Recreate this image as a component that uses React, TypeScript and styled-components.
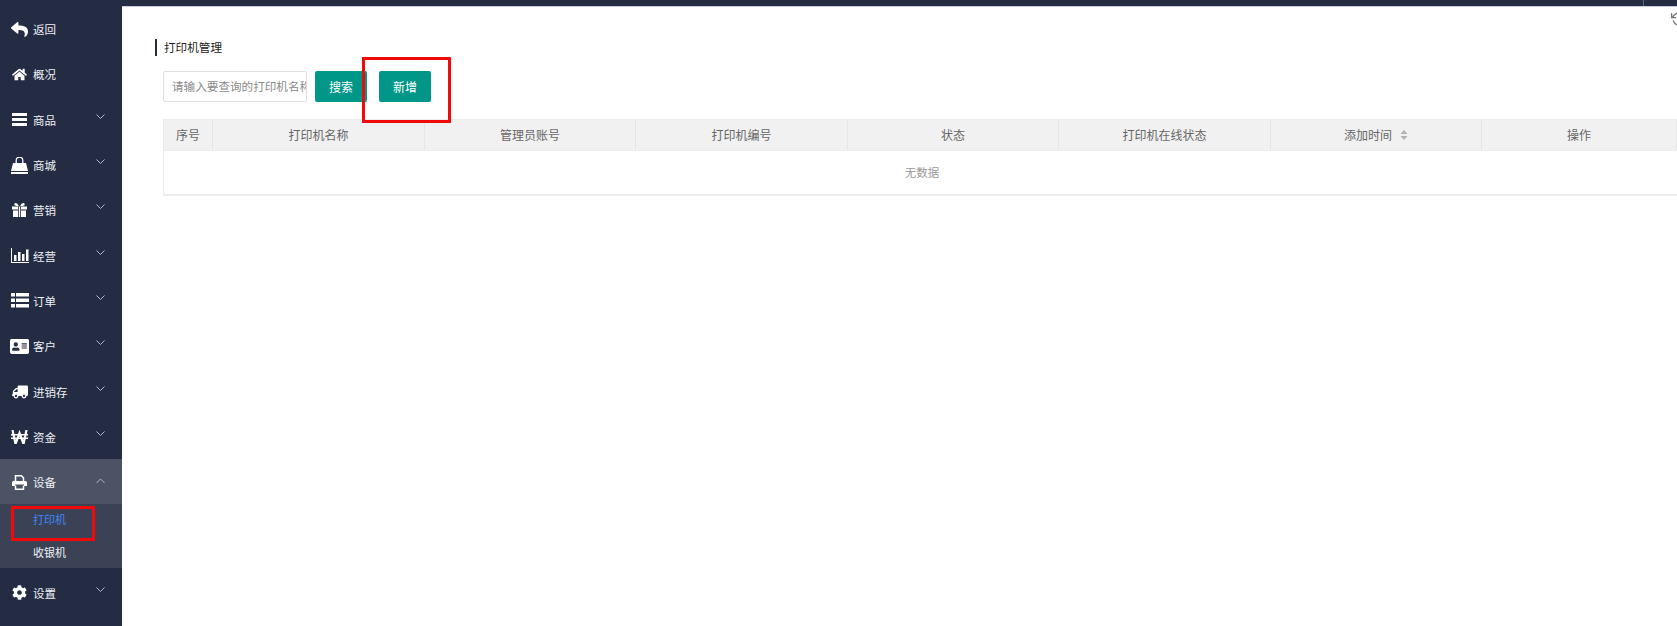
import React from "react";
import styled, { createGlobalStyle } from "styled-components";
import { FaReply, FaHome, FaAddressCard, FaTruck, FaCog } from "react-icons/fa";
import { FiRotateCcw } from "react-icons/fi";

const Global = createGlobalStyle`
  html, body { margin: 0; padding: 0; height: 100%; overflow: hidden; background: #fff; }
  body { font-family: "Liberation Sans", "Noto Sans CJK SC", sans-serif; font-size: 12px; }
  * { box-sizing: border-box; }
`;

const navy = "#242c44";

const Page = styled.div`
  position: relative;
  width: 1677px;
  height: 626px;
  overflow: hidden;
  display: grid;
  grid-template-columns: 122px 1fr;
  grid-template-rows: 6px 1fr;
  background: ${navy};
`;

const TopBar = styled.div`
  grid-column: 1 / 3;
  display: flex;
  justify-content: flex-end;
  padding-right: 33px;
`;
const TopDivider = styled.div`
  width: 1px;
  background: #5a6378;
`;

const Sidebar = styled.nav`
  display: flex;
  flex-direction: column;
  color: #fff;
`;

const Row = styled.div<{ $active?: boolean; $pad?: number }>`
  height: 45.3px;
  flex: none;
  display: flex;
  align-items: center;
  padding: ${(p) => p.$pad ?? 3}px 0 0 0;
  background: ${(p) => (p.$active ? "#4c5365" : "transparent")};
`;
const IconSlot = styled.span`
  width: 33px;
  padding: 0 0 2px 6px;
  height: 20px;
  display: flex;
  align-items: center;
  justify-content: center;
  font-size: 15px;
  flex: none;
`;
const BigIcon = styled.span`
  display: flex;
  font-size: 17px;
`;
const CardIcon = styled.span`
  display: flex;
  font-size: 19px;
`;
const TruckIcon = styled.span`
  display: flex;
  font-size: 16px;
  transform: scaleX(-1);
`;
const Label = styled.span`
  flex: 1;
  font-size: 11.5px;
  line-height: 16px;
  color: #eef0f4;
`;
const Caret = styled.svg<{ $open?: boolean }>`
  width: 9px;
  height: 6px;
  margin-right: 17px;
  fill: none;
  stroke: #aeb8c2;
  stroke-width: 1;
  transform: translateY(${(p) => (p.$open ? "-2px" : "-4px")});
`;
const SubMenu = styled.div`
  height: 64px;
  flex: none;
  background: #3b4255;
  display: flex;
  flex-direction: column;
`;
const SubItem = styled.div<{ $current?: boolean }>`
  height: 32px;
  padding: 0 0 ${(p) => (p.$current ? 2 : 0)}px 33px;
  display: flex;
  align-items: center;
  font-size: 11px;
  color: ${(p) => (p.$current ? "#3f87f5" : "#eef0f4")};
`;
const Glyph = styled.svg`
  display: block;
  fill: currentColor;
`;

const Main = styled.main`
  position: relative;
  background: #fff;
  border-top: 1px solid #c9ccd3;
  padding: 32px 0 0 33px;
  color: #333;
`;
const Refresh = styled.span`
  position: absolute;
  left: 1549px;
  top: 4px;
  color: #777;
  font-size: 16px;
  display: flex;
`;
const Title = styled.h2`
  margin: 0 0 15px 0;
  height: 17px;
  border-left: 2px solid ${navy};
  padding-left: 7px;
  font-size: 11.6px;
  font-weight: 400;
  line-height: 18px;
  color: #222;
`;
const Toolbar = styled.div`
  display: flex;
  align-items: stretch;
  height: 31px;
  margin: 0 0 17px 8px;
`;
const SearchInput = styled.input`
  width: 144px;
  height: 31px;
  border: 1px solid #e0e0e0;
  border-radius: 2px;
  padding: 0 0 0 8px;
  font: 11.6px "Liberation Sans", "Noto Sans CJK SC", sans-serif;
  outline: none;
  &::placeholder { color: #8a8a8a; opacity: 1; }
`;
const Button = styled.button<{ $gap: number }>`
  width: 52px;
  height: 31px;
  margin-left: ${(p) => p.$gap}px;
  border: 0;
  border-radius: 2px;
  background: #009688;
  color: #fff;
  font: 12px "Liberation Sans", "Noto Sans CJK SC", sans-serif;
  padding: 0;
`;
const Table = styled.div`
  margin-left: 8px;
  width: 1514px;
  border: 1px solid #ececec;
  border-right: 0;
`;
const HeaderRow = styled.div`
  display: grid;
  grid-template-columns: 49px 212px 211px 212px 211px 212px 211px 1fr;
  height: 31px;
  background: #f1f1f1;
  border-bottom: 1px solid #ececec;
`;
const HeaderCell = styled.div`
  display: flex;
  align-items: center;
  justify-content: center;
  gap: 8px;
  padding-bottom: 1px;
  border-right: 1px solid #e6e6e6;
  color: #666;
  font-size: 12px;
`;
const SortIcon = styled.svg`
  width: 8px;
  height: 10px;
  fill: #b2b2b2;
`;
const EmptyRow = styled.div`
  height: 44px;
  display: flex;
  align-items: center;
  justify-content: center;
  padding: 0 0 2px 3px;
  color: #999;
  font-size: 11.5px;
  border-bottom: 1px solid #ececec;
`;
const Highlight = styled.div<{ $x: number; $y: number; $w: number; $h: number }>`
  position: absolute;
  left: ${(p) => p.$x}px;
  top: ${(p) => p.$y}px;
  width: ${(p) => p.$w}px;
  height: ${(p) => p.$h}px;
  border: 3px solid #f00a0a;
  pointer-events: none;
`;

const BarsIcon = () => (
  <Glyph width="15" height="13" viewBox="0 0 15 13">
    <rect width="15" height="3" />
    <rect y="5" width="15" height="3" />
    <rect y="10" width="15" height="3" />
  </Glyph>
);
const BagIcon = () => (
  <Glyph width="17" height="17" viewBox="0 0 17 17">
    <path d="M2 6h13l2 8H0z" />
    <rect y="15" width="17" height="2" />
    <path d="M5.2 6V3.5a3.3 3.3 0 0 1 6.6 0V6" fill="none" stroke="currentColor" strokeWidth="1.3" />
  </Glyph>
);
const GiftIcon = () => (
  <Glyph width="15" height="14" viewBox="0 0 15 14">
    <path d="M0 3.5h6v3H0zM9 3.5h6v3H9zM1 7.5h5V14H1zM9 7.5h5V14H9zM6.8 3.5h1.4V14H6.8z" />
    <path d="M7 3.2C5.5.6 4.6 0 3.6 0 2.4 0 2 1 2.4 2c.3.7 1.5 1.2 4.6 1.2zM8 3.2C9.5.6 10.4 0 11.4 0c1.2 0 1.6 1 1.2 2-.3.7-1.5 1.2-4.6 1.2z" />
  </Glyph>
);
const ChartIcon = () => (
  <Glyph width="18" height="15" viewBox="0 0 18 15">
    <path d="M0 0h1v14h17v1H0z" />
    <rect x="3" y="7" width="2.5" height="6" />
    <rect x="7" y="4" width="2.5" height="9" />
    <rect x="11" y="6" width="2.5" height="7" />
    <rect x="15" y="1.5" width="2.5" height="11.5" />
  </Glyph>
);
const ListIcon = () => (
  <Glyph width="18" height="15" viewBox="0 0 18 15">
    <path d="M0 0h4v3.5H0zM5 0h13v3.5H5zM0 5.5h4V9H0zM5 5.5h13V9H5zM0 11h4v3.5H0zM5 11h13v3.5H5z" />
  </Glyph>
);
const WonIcon = () => (
  <Glyph width="17" height="14" viewBox="0 0 17 14">
    <path d="M1.5 0l3 14 4-11 4 11 3-14" fill="none" stroke="currentColor" strokeWidth="2.2" />
    <rect y="4" width="17" height="1.5" />
    <rect y="7.5" width="17" height="1.5" />
  </Glyph>
);
const PrintIcon = () => (
  <Glyph width="15" height="15" viewBox="0 0 15 15">
    <path d="M3.5 6.5V.8h6L11.5 3v3.500M3.500 10.500v3.700h8v-3.700" fill="none" stroke="currentColor" strokeWidth="1.5" />
    <path d="M1.500 6h12A1.500 1.500 0 0 1 15 7.500V11h-3V9.500H3V11H0V7.500A1.500 1.500 0 0 1 1.500 6z" />
  </Glyph>
);

const menu: { icon: React.ReactNode; label: string; caret?: boolean }[] = [
  { icon: <BigIcon><FaReply /></BigIcon>, label: "返回" },
  { icon: <FaHome />, label: "概况" },
  { icon: <BarsIcon />, label: "商品", caret: true },
  { icon: <BagIcon />, label: "商城", caret: true },
  { icon: <GiftIcon />, label: "营销", caret: true },
  { icon: <ChartIcon />, label: "经营", caret: true },
  { icon: <ListIcon />, label: "订单", caret: true },
  { icon: <CardIcon><FaAddressCard /></CardIcon>, label: "客户", caret: true },
  { icon: <TruckIcon><FaTruck /></TruckIcon>, label: "进销存", caret: true },
  { icon: <WonIcon />, label: "资金", caret: true },
];

const columns = ["序号", "打印机名称", "管理员账号", "打印机编号", "状态", "打印机在线状态", "添加时间", "操作"];

export default function App() {
  return (
    <Page>
      <Global />
      <TopBar><TopDivider /></TopBar>
      <Sidebar>
        {menu.map((m) => (
          <Row key={m.label}>
            <IconSlot>{m.icon}</IconSlot>
            <Label>{m.label}</Label>
            {m.caret && (
              <Caret viewBox="0 0 9 6"><path d="M.5.5L4.5 4.5 8.500.5" /></Caret>
            )}
          </Row>
        ))}
        <Row $active>
          <IconSlot><PrintIcon /></IconSlot>
          <Label>设备</Label>
          <Caret $open viewBox="0 0 9 6"><path d="M.5 5L4.500 1l4 4" /></Caret>
        </Row>
        <SubMenu>
          <SubItem $current>打印机</SubItem>
          <SubItem>收银机</SubItem>
        </SubMenu>
        <Row $pad={6}>
          <IconSlot><FaCog /></IconSlot>
          <Label>设置</Label>
          <Caret viewBox="0 0 9 6"><path d="M.5.5L4.5 4.5 8.500.5" /></Caret>
        </Row>
      </Sidebar>
      <Main>
        <Refresh><FiRotateCcw /></Refresh>
        <Title>打印机管理</Title>
        <Toolbar>
          <SearchInput placeholder="请输入要查询的打印机名称" />
          <Button $gap={8}>搜索</Button>
          <Button $gap={12}>新增</Button>
        </Toolbar>
        <Table>
          <HeaderRow>
            {columns.map((c) => (
              <HeaderCell key={c}>
                {c}
                {c === "添加时间" && (
                  <SortIcon viewBox="0 0 8 10">
                    <path d="M4 0l3.500 4H.5zM4 10L.5 6h7z" />
                  </SortIcon>
                )}
              </HeaderCell>
            ))}
          </HeaderRow>
          <EmptyRow>无数据</EmptyRow>
        </Table>
      </Main>
      <Highlight $x={11} $y={506} $w={84} $h={35} />
      <Highlight $x={362} $y={57} $w={89} $h={66} />
    </Page>
  );
}
